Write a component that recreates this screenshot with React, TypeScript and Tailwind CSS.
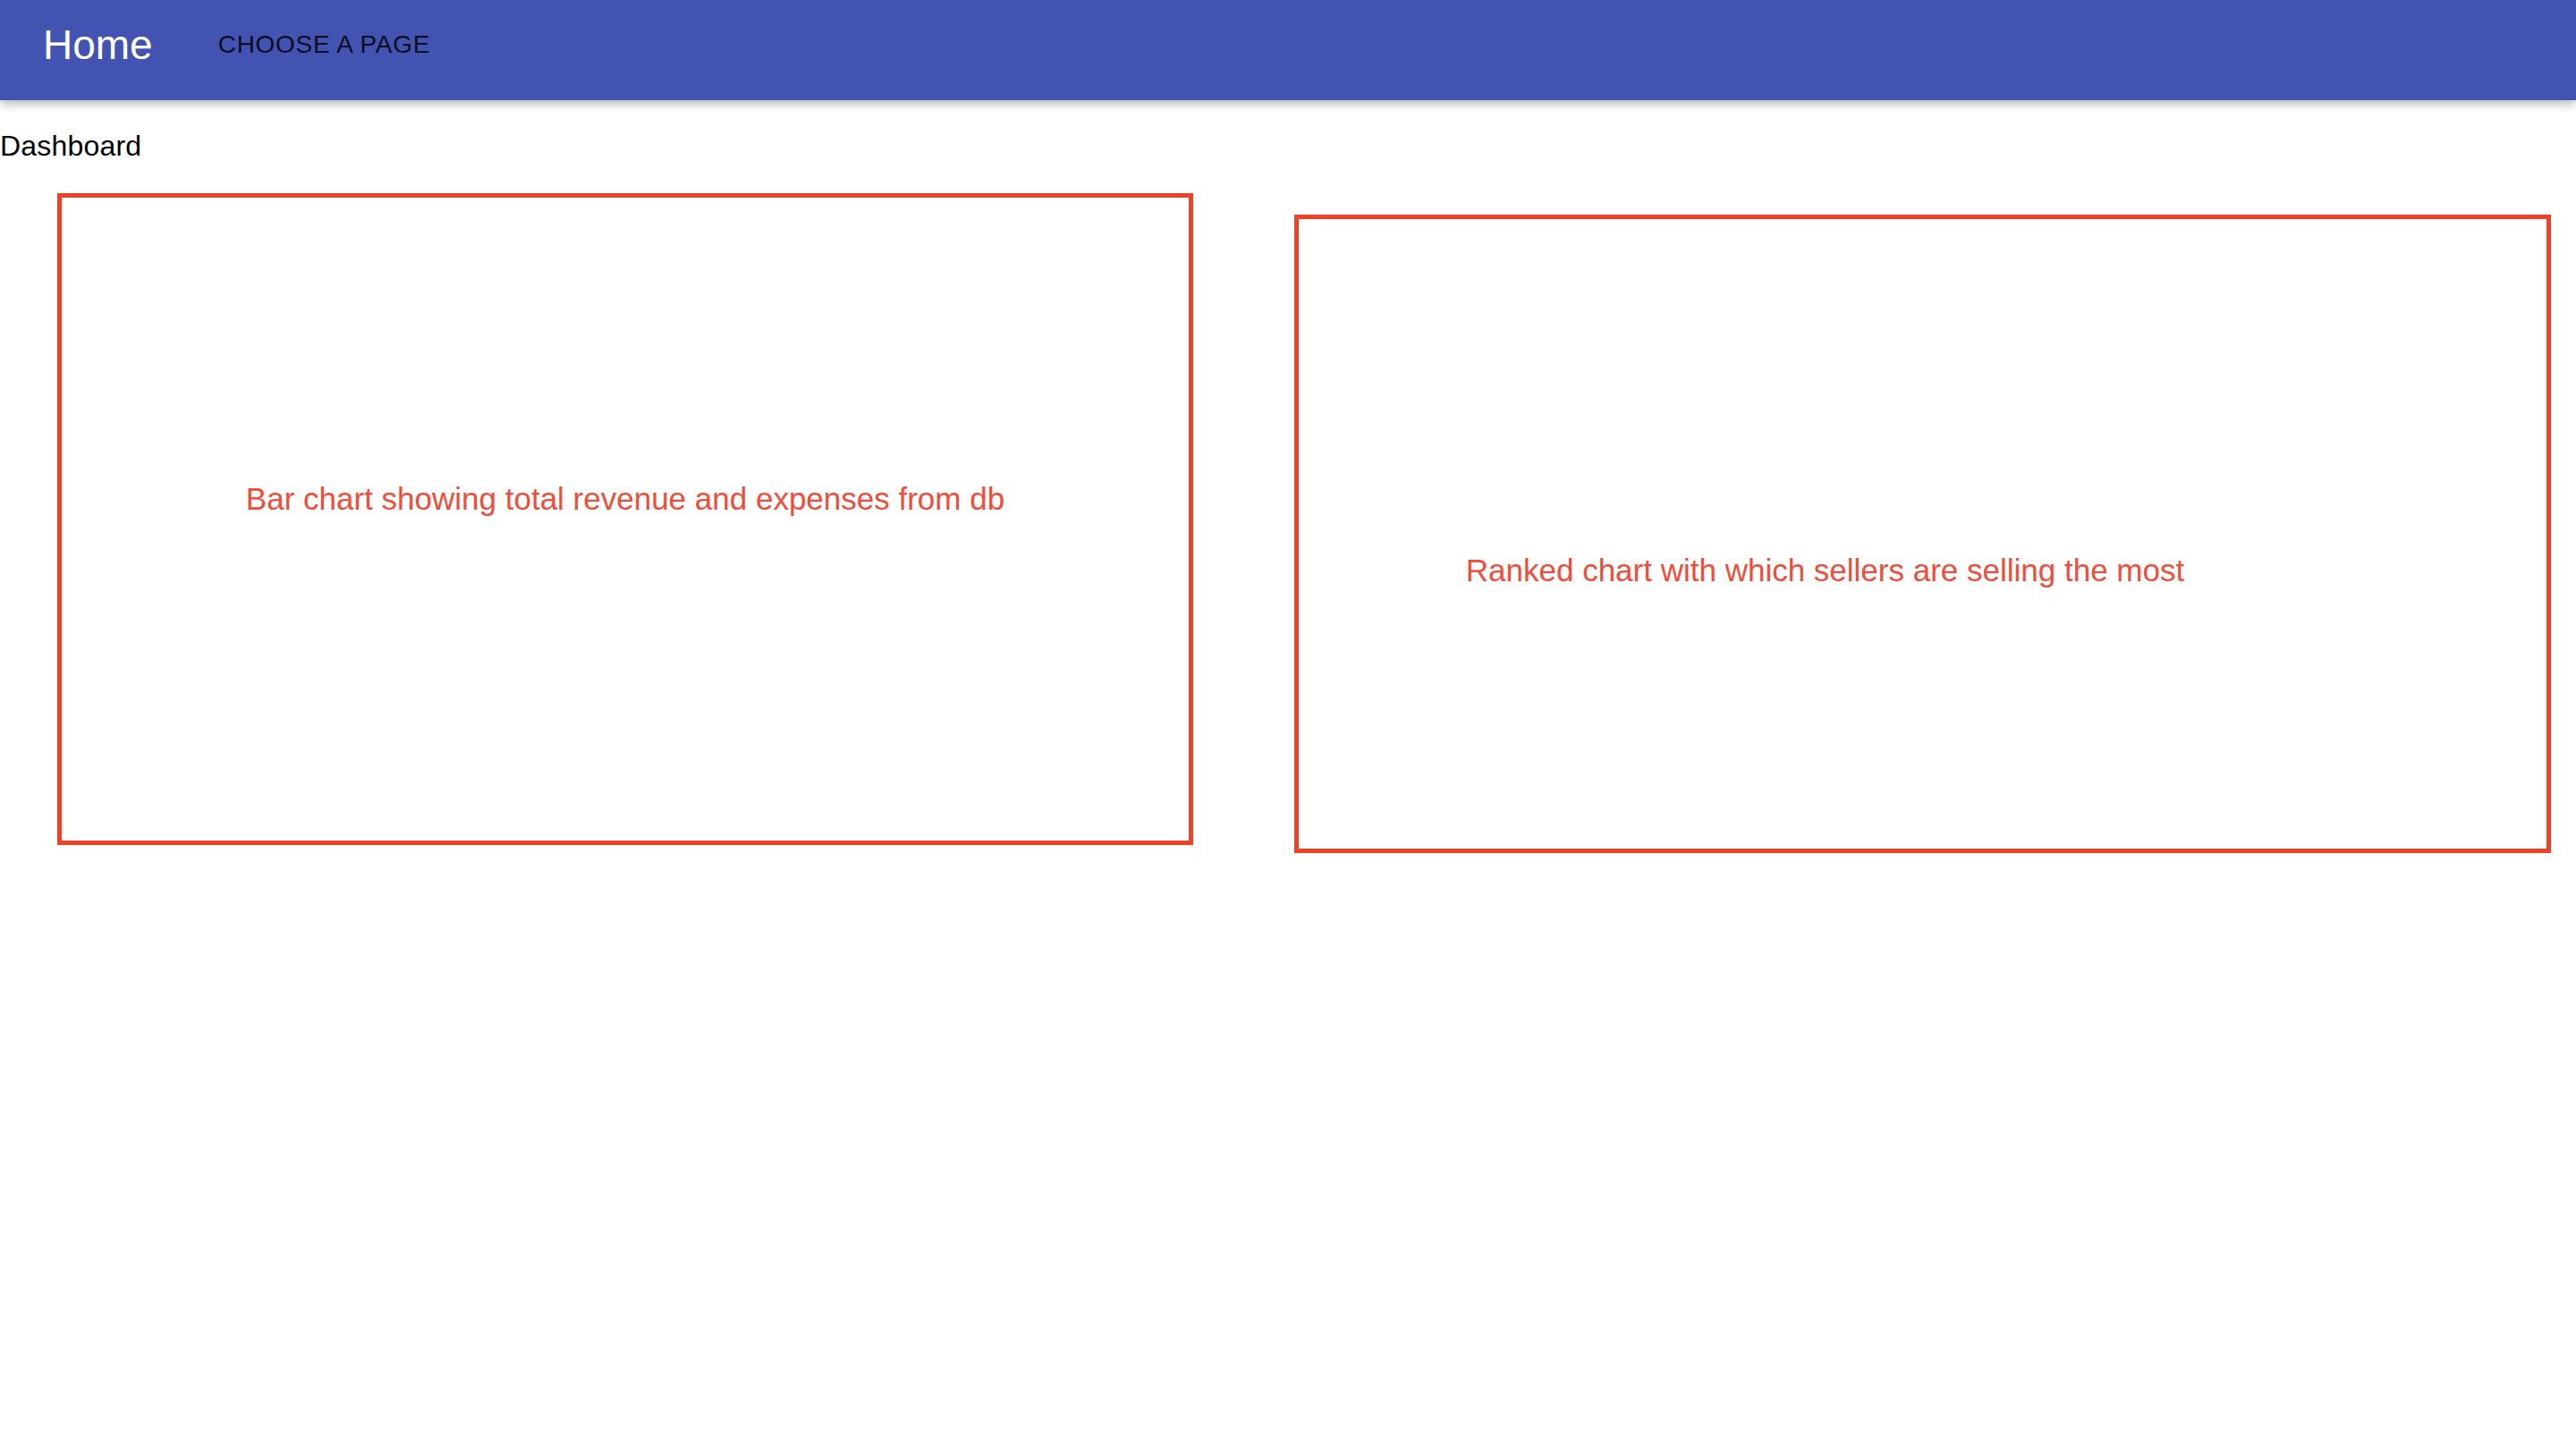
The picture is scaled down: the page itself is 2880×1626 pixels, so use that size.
const font = { fontFamily: '"Liberation Sans", Arial, sans-serif' };

const ChartPlaceholder = ({
  label,
  className,
  innerClassName,
}: {
  label: string;
  className: string;
  innerClassName: string;
}) => (
  <div className={`border-[5px] border-[#ef4126] bg-white ${className}`}>
    <div className={`flex h-full w-full items-center justify-center ${innerClassName}`}>
      <p className="text-[35px] leading-none tracking-[0px] text-[#ef4d3a] whitespace-nowrap">
        {label}
      </p>
    </div>
  </div>
);

export default function App() {
  return (
    <div className="min-h-[1626px] w-[2880px] bg-white" style={font}>
      {/* top bar */}
      <header className="relative z-10 flex h-[112px] items-center bg-[#4253b1] pb-[12px] pl-[48px] shadow-[0_4px_10px_rgba(0,0,0,0.3)]">
        <h1 className="text-[46px] leading-none text-white">Home</h1>
        <button className="ml-[73px] text-[28px] leading-none tracking-[0.7px] text-[#0b0e1f] uppercase">
          Choose a page
        </button>
      </header>

      <main>
        <div className="mt-[36px] text-[32px] leading-[31px] tracking-[0.2px] text-black">
          Dashboard
        </div>

        <div className="mt-[37px] flex items-start gap-[113px] pl-[64px]">
          <ChartPlaceholder
            label="Bar chart showing total revenue and expenses from db"
            className="h-[729px] w-[1270px]"
            innerClassName="pb-[46px]"
          />
          <ChartPlaceholder
            label="Ranked chart with which sellers are selling the most"
            className="mt-[24px] h-[714px] w-[1405px]"
            innerClassName="pt-[80px] pr-[218px]"
          />
        </div>
      </main>
    </div>
  );
}
